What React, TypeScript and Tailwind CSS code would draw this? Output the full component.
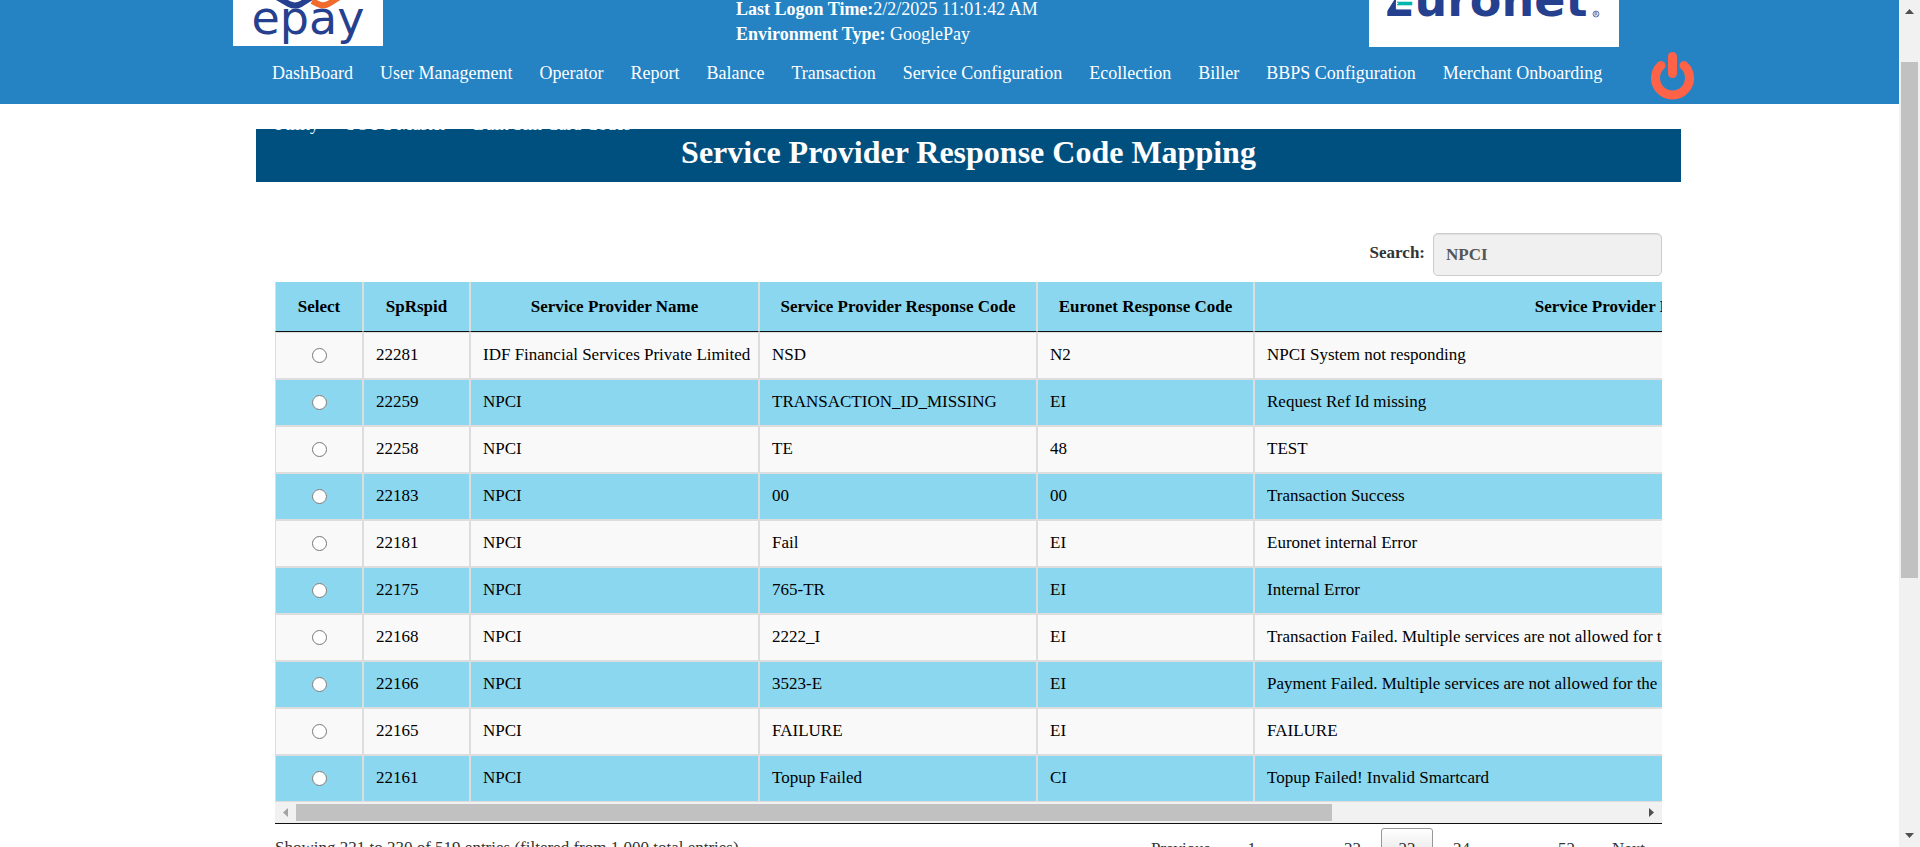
import { useState } from "react";

const navItems = [
  "DashBoard",
  "User Management",
  "Operator",
  "Report",
  "Balance",
  "Transaction",
  "Service Configuration",
  "Ecollection",
  "Biller",
  "BBPS Configuration",
  "Merchant Onboarding",
  "Utility",
  "SOTC Master",
  "Bulk Sim Card Codes",
];

const columns = [
  { label: "Select", width: "w-[88px]" },
  { label: "SpRspid", width: "w-[107px]" },
  { label: "Service Provider Name", width: "w-[289px]" },
  { label: "Service Provider Response Code", width: "w-[278px]" },
  { label: "Euronet Response Code", width: "w-[217px]" },
  { label: "Service Provider Response Message", width: "w-[820px]" },
];

const rows = [
  ["22281", "IDF Financial Services Private Limited", "NSD", "N2", "NPCI System not responding"],
  ["22259", "NPCI", "TRANSACTION_ID_MISSING", "EI", "Request Ref Id missing"],
  ["22258", "NPCI", "TE", "48", "TEST"],
  ["22183", "NPCI", "00", "00", "Transaction Success"],
  ["22181", "NPCI", "Fail", "EI", "Euronet internal Error"],
  ["22175", "NPCI", "765-TR", "EI", "Internal Error"],
  ["22168", "NPCI", "2222_I", "EI", "Transaction Failed. Multiple services are not allowed for the same user"],
  ["22166", "NPCI", "3523-E", "EI", "Payment Failed. Multiple services are not allowed for the same user"],
  ["22165", "NPCI", "FAILURE", "EI", "FAILURE"],
  ["22161", "NPCI", "Topup Failed", "CI", "Topup Failed! Invalid Smartcard"],
];

function EpayLogo() {
  return (
    <svg className="h-[46px] w-[150px] shrink-0 bg-white" viewBox="0 0 150 46" role="img" aria-label="epay">
      <text x="75" y="34" textAnchor="middle" fontFamily="'DejaVu Sans', sans-serif" fontSize="46" fill="#25408f">
        epay
      </text>
      <path d="M42 -4 L56 4 Q62 7 68 4 L82 -5" fill="none" stroke="#25408f" strokeWidth="6" />
      <path d="M79 1 L85 4 Q91 7 97 3 L108 -4" fill="none" stroke="#f26a2c" strokeWidth="6" />
    </svg>
  );
}

function EuronetLogo() {
  return (
    <svg className="h-[47px] w-[250px] shrink-0 bg-white" viewBox="0 0 250 47" role="img" aria-label="Euronet">
      <text x="14" y="16" fontFamily="'DejaVu Sans', sans-serif" fontWeight="700" fontSize="46" fill="#25408f">
        Euronet
      </text>
      <path d="M15 -6 H29 L17 13 H15 Z" fill="#ffffff" />
      <rect x="27" y="-6" width="18" height="14" fill="#ffffff" />
      <path d="M28 2 H43 V5 H28 L30 3 Z" fill="#00b5ad" stroke="#00b5ad" strokeWidth="0.6" />
      <circle cx="227" cy="14" r="3" fill="none" stroke="#25408f" strokeWidth="0.7" />
      <path d="M226 16 V12 H227.5 Q229 13 227.5 14 H226 M227.5 14 L228.6 16" fill="none" stroke="#25408f" strokeWidth="0.6" />
    </svg>
  );
}

function Header() {
  return (
    <header className="relative z-10 h-[104px] bg-[#2583c4] text-white">
      <div className="flex h-[47px] items-start pr-[280px] pl-[233px]">
        <EpayLogo />
        <div className="-mt-[3px] flex-1 pl-[353px] text-[18px] leading-[25px]">
          <p>
            <strong>Last Logon Time:</strong>2/2/2025 11:01:42 AM
          </p>
          <p>
            <strong>Environment Type:</strong> GooglePay
          </p>
        </div>
        <EuronetLogo />
      </div>
      <div className="flex items-start pl-[259px]">
        <nav className="w-[1374px]">
          <ul className="flex flex-wrap gap-x-px">
            {navItems.map((item) => (
              <li key={item}>
                <a href="#" className="block px-[13px] pt-[14px] pb-3 text-[18px] leading-[25px] whitespace-nowrap">
                  {item}
                </a>
              </li>
            ))}
          </ul>
        </nav>
        <button type="button" aria-label="Log out" className="mt-[5px] ml-[18px]">
          <svg className="h-[48px] w-[43px]" viewBox="0 0 43 48" fill="none" stroke="#ff6347" strokeLinecap="round">
            <path d="M10 13.5 A17 17 0 1 0 33 13.5" strokeWidth="9" />
            <path d="M21.5 4.5 V21.5" strokeWidth="9" />
          </svg>
        </button>
      </div>
    </header>
  );
}

function ResponseTable() {
  const [selected, setSelected] = useState("");
  return (
    <div className="overflow-hidden">
      <table className="w-[1799px] table-fixed border-separate border-spacing-0 text-black">
        <thead>
          <tr className="h-[50px] bg-[#8bd7ef]">
            {columns.map((c) => (
              <th key={c.label} className={`${c.width} border-x border-b border-x-[#ddd] border-b-[#111] p-0 text-center font-bold`}>
                {c.label}
              </th>
            ))}
          </tr>
        </thead>
        <tbody>
          {rows.map((r) => (
            <tr key={r[0]} className="h-[47px] odd:bg-[#f9f9f9] even:bg-[#8bd7ef]">
              <td className="border border-[#ddd] p-0">
                <input
                  type="radio"
                  name="row"
                  aria-label={`Select ${r[0]}`}
                  checked={selected === r[0]}
                  onChange={() => setSelected(r[0])}
                  className="mx-auto block size-[15px]"
                />
              </td>
              {r.map((cell, i) => (
                <td key={i} className="border border-[#ddd] px-3 pt-0 pb-[2px] whitespace-nowrap">
                  {cell}
                </td>
              ))}
            </tr>
          ))}
        </tbody>
      </table>
    </div>
  );
}

function HorizontalScrollbar() {
  return (
    <div className="flex h-[21px] items-center bg-[#f1f1f1]">
      <svg className="mx-[7px] h-[9px] w-[7px]" viewBox="0 0 7 9">
        <path d="M6 0 V9 L1 4.5 Z" fill="#a3a3a3" />
      </svg>
      <div className="flex-1">
        <div className="h-[17px] w-[77%] bg-[#c1c1c1]" />
      </div>
      <svg className="mx-[7px] h-[9px] w-[7px]" viewBox="0 0 7 9">
        <path d="M1 0 V9 L6 4.5 Z" fill="#505050" />
      </svg>
    </div>
  );
}

function VerticalScrollbar() {
  return (
    <div className="flex w-[21px] shrink-0 flex-col items-center bg-[#f1f1f1] py-2">
      <svg className="h-[7px] w-[9px]" viewBox="0 0 9 7">
        <path d="M0 6 H9 L4.5 1 Z" fill="#505050" />
      </svg>
      <div className="flex w-full flex-1 flex-col items-center pt-[47px]">
        <div className="h-[67%] w-[17px] bg-[#c1c1c1]" />
      </div>
      <svg className="h-[7px] w-[9px]" viewBox="0 0 9 7">
        <path d="M0 1 H9 L4.5 6 Z" fill="#505050" />
      </svg>
    </div>
  );
}

function Pagination() {
  const page = "h-[42px] px-[17px] text-center";
  return (
    <nav className="flex gap-[3px] text-[#333]" aria-label="Pages">
      <button type="button" className={page}>Previous</button>
      <button type="button" className={page}>1</button>
      <span className="flex h-[42px] w-[48px] items-center justify-center">…</span>
      <button type="button" className={page}>22</button>
      <button
        type="button"
        aria-current="page"
        className="h-[42px] w-[52px] rounded-[3px] border border-[#979797] bg-linear-to-b from-white to-[#dcdcdc]"
      >
        23
      </button>
      <button type="button" className={page}>24</button>
      <span className="flex h-[42px] w-[48px] items-center justify-center">…</span>
      <button type="button" className={page}>52</button>
      <button type="button" className={page}>Next</button>
    </nav>
  );
}

export default function App() {
  return (
    <div className="flex h-screen overflow-hidden bg-white font-['Liberation_Serif',serif] text-[17px]">
      <div className="min-w-0 flex-1 overflow-hidden">
        <Header />
        <main className="mr-[218px] ml-[256px] pt-[25px]">
          <h1 className="h-[53px] bg-[#00507f] text-center text-[32px] leading-[46px] font-bold text-white">
            Service Provider Response Code Mapping
          </h1>
          <section className="mx-[19px] pt-[51px]">
            <div className="flex items-center justify-end pb-[6px]">
              <label htmlFor="search" className="mr-2 pb-1 font-bold text-[#333]">
                Search:
              </label>
              <input
                id="search"
                type="text"
                defaultValue="NPCI"
                className="h-[43px] w-[229px] rounded-[5px] border border-[#ccc] bg-[#f0f0f0] px-3 font-bold text-[#555] shadow-[inset_0_1px_1px_rgba(0,0,0,0.075)]"
              />
            </div>
            <div className="border-b border-[#111]">
              <ResponseTable />
              <HorizontalScrollbar />
            </div>
            <div className="flex items-start justify-between pt-1">
              <p className="pt-2 leading-6 text-[#333]">Showing 221 to 230 of 519 entries (filtered from 1,000 total entries)</p>
              <Pagination />
            </div>
          </section>
        </main>
      </div>
      <VerticalScrollbar />
    </div>
  );
}
